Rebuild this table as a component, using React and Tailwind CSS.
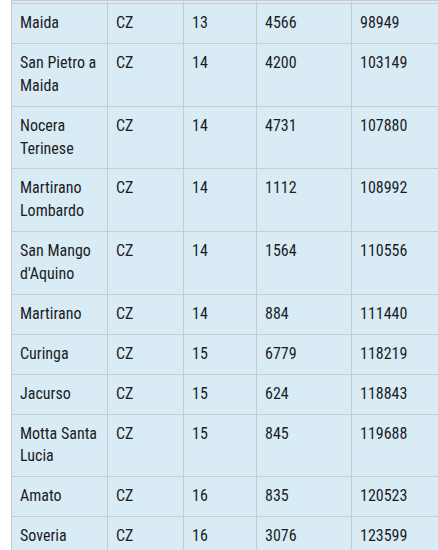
const rows = [
  ['Maida', 'CZ', '13', '4566', '98949'],
  ['San Pietro a Maida', 'CZ', '14', '4200', '103149'],
  ['Nocera Terinese', 'CZ', '14', '4731', '107880'],
  ['Martirano Lombardo', 'CZ', '14', '1112', '108992'],
  ["San Mango d'Aquino", 'CZ', '14', '1564', '110556'],
  ['Martirano', 'CZ', '14', '884', '111440'],
  ['Curinga', 'CZ', '15', '6779', '118219'],
  ['Jacurso', 'CZ', '15', '624', '118843'],
  ['Motta Santa Lucia', 'CZ', '15', '845', '119688'],
  ['Amato', 'CZ', '16', '835', '120523'],
  ['Soveria', 'CZ', '16', '3076', '123599'],
];

const widths = ['w-[96px]', 'w-[76px]', 'w-[73px]', 'w-[95px]', 'w-[110px]'];

export default function App() {
  return (
    <div className="h-[550px] w-[438px] overflow-hidden bg-white">
      <table
        className="ml-[11px] w-[450px] table-fixed border-collapse bg-[#d9ecf6] text-[16px] leading-[22.87px] text-[#1b1c1f]"
        style={{ fontFamily: "'Roboto Condensed', Roboto, sans-serif" }}
      >
        <colgroup>
          {widths.map((w, i) => (
            <col key={i} className={w} />
          ))}
        </colgroup>
        <tbody>
          <tr className="h-[3px]">
            {widths.map((w, i) => (
              <td key={i} className="border border-[#c8ccd1] p-0" />
            ))}
          </tr>
          {rows.map((r) => (
            <tr key={r[0]}>
              {r.map((c, i) => (
                <td key={i} className="border border-[#c8ccd1] px-2 py-2 align-top">
                  {c}
                </td>
              ))}
            </tr>
          ))}
        </tbody>
      </table>
    </div>
  );
}
